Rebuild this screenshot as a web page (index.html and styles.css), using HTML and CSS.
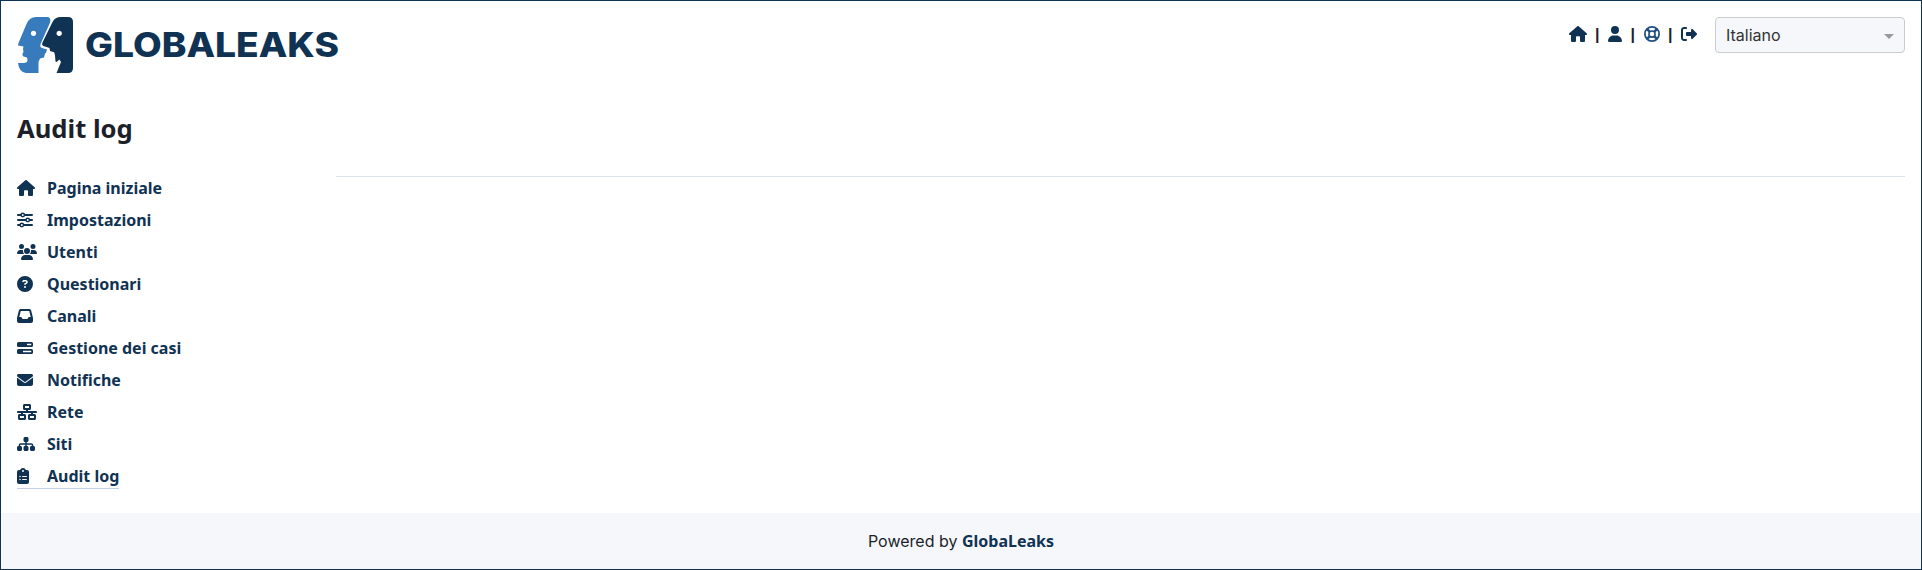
FILE: index.html
```html
<!DOCTYPE html>
<html lang="it">
<head>
<meta charset="utf-8">
<title>GLOBALEAKS - Audit log</title>
<link rel="stylesheet" href="styles.css">
</head>
<body>
<svg class="sprite" aria-hidden="true">
  <symbol id="house" viewBox="0 0 576 512"><path d="M575.8 255.5c0 18-15 32.1-32 32.1h-32l.7 160.2c0 2.700-.2 5.400-.5 8.100V472c0 22.100-17.900 40-40 40H392c-22.100 0-40-17.900-40-40V360c0-17.700-14.300-32-32-32H256c-17.700 0-32 14.300-32 32v112c0 22.100-17.900 40-40 40H104c-22.100 0-40-17.900-40-40V287.600H32c-18 0-32-14-32-32.100 0-9 3-17 10-24L266.400 8c7-7 15-8 22-8s15 2 21 7L564.800 231.500c8 7 12 15 11 24z"/></symbol>
  <symbol id="user" viewBox="0 0 448 512"><path d="M224 256A128 128 0 1 0 224 0a128 128 0 1 0 0 256zm-45.700 48C79.800 304 0 383.800 0 482.300 0 498.700 13.300 512 29.700 512H418.300c16.400 0 29.700-13.300 29.700-29.700C448 383.800 368.200 304 269.700 304H178.300z"/></symbol>
  <symbol id="exit" viewBox="0 0 512 512"><path d="M502.600 278.600c12.500-12.500 12.500-32.800 0-45.300l-128-128c-9.200-9.200-22.900-11.900-34.900-6.900S320 115.100 320 128v64H192c-17.700 0-32 14.300-32 32v64c0 17.700 14.300 32 32 32H320v64c0 12.900 7.800 24.600 19.800 29.600s25.700 2.200 34.900-6.900l128-128zM160 96c17.700 0 32-14.300 32-32s-14.300-32-32-32H96C43 32 0 75 0 128V384c0 53 43 96 96 96h64c17.700 0 32-14.300 32-32s-14.300-32-32-32H96c-17.700 0-32-14.300-32-32V128c0-17.700 14.300-32 32-32h64z"/></symbol>
  <symbol id="ring" viewBox="0 0 512 512"><g fill="none" stroke="currentColor"><circle cx="256" cy="256" r="228" stroke-width="56"/><circle cx="256" cy="256" r="98" stroke-width="52"/><path stroke-width="80" d="M100 100l86 86M412 100l-86 86M100 412l86-86M412 412l-86-86"/></g></symbol>
  <symbol id="sliders" viewBox="0 0 512 512"><g fill="none" stroke="currentColor" stroke-width="48"><path stroke-width="60" stroke-linecap="round" d="M30 96h90M250 96h232M30 256h248M410 256h72M30 416h58M220 416h262"/><circle cx="184" cy="96" r="54"/><circle cx="344" cy="256" r="54"/><circle cx="154" cy="416" r="54"/></g></symbol>
  <symbol id="users" viewBox="0 0 640 512"><path d="M144 0a80 80 0 1 1 0 160A80 80 0 1 1 144 0zM512 0a80 80 0 1 1 0 160A80 80 0 1 1 512 0zM0 298.700C0 239.800 47.800 192 106.700 192h42.700c15.900 0 31 3.500 44.600 9.700-1.300 7.200-1.900 14.700-1.900 22.300 0 38.200 16.800 72.500 43.300 96H21.300C9.600 320 0 310.400 0 298.700zM405.300 320h-.7c26.600-23.500 43.300-57.800 43.300-96 0-7.600-.7-15-1.900-22.300 13.600-6.300 28.700-9.700 44.600-9.700h42.700C592.200 192 640 239.800 640 298.700c0 11.800-9.600 21.300-21.300 21.300H405.300zM224 224a96 96 0 1 1 192 0 96 96 0 1 1-192 0zM128 485.300C128 411.700 187.700 352 261.300 352H378.700C452.300 352 512 411.700 512 485.300c0 14.700-11.900 26.700-26.700 26.700H154.700C140 512 128 500.100 128 485.300z"/></symbol>
  <symbol id="question" viewBox="0 0 512 512"><path d="M256 512A256 256 0 1 0 256 0a256 256 0 1 0 0 512zM169.800 165.300c7.900-22.300 29.100-37.300 52.800-37.300h58.300c34.900 0 63.100 28.300 63.100 63.100 0 22.600-12.100 43.500-31.700 54.800L280 264.400c-.2 13-10.900 23.600-24 23.600-13.300 0-24-10.700-24-24V250.500c0-8.600 4.600-16.500 12.100-20.800l44.300-25.400c4.700-2.700 7.600-7.700 7.600-13.100 0-8.400-6.800-15.100-15.100-15.100H222.600c-3.400 0-6.400 2.100-7.500 5.300l-.4 1.200c-4.400 12.500-18.200 19-30.600 14.600s-19-18.200-14.600-30.600zM224 352a32 32 0 1 1 64 0 32 32 0 1 1-64 0z"/></symbol>
  <symbol id="inbox" viewBox="0 0 512 512"><path d="M121 32C91.600 32 66 52 58.900 80.500L1.900 308.400C.6 313.500 0 318.700 0 323.900V416c0 35.300 28.700 64 64 64H448c35.300 0 64-28.700 64-64V323.900c0-5.200-.6-10.400-1.900-15.500l-57-227.900C446 52 420.400 32 391 32H121zm0 64H391l48 192H387.800c-12.100 0-23.200 6.800-28.600 17.700l-14.300 28.600c-5.400 10.800-16.500 17.700-28.600 17.700H195.800c-12.100 0-23.200-6.800-28.600-17.700l-14.300-28.600C147.400 294.800 136.300 288 124.200 288H73L121 96z"/></symbol>
  <symbol id="bars" viewBox="0 0 512 512"><path fill-rule="evenodd" d="M48 64h416a48 48 0 0 1 48 48v64a48 48 0 0 1-48 48H48a48 48 0 0 1-48-48v-64a48 48 0 0 1 48-48zm272 56v48h136v-48zM48 288h416a48 48 0 0 1 48 48v64a48 48 0 0 1-48 48H48a48 48 0 0 1-48-48v-64a48 48 0 0 1 48-48zm144 56v48h264v-48z"/></symbol>
  <symbol id="mail" viewBox="0 0 512 512"><path d="M48 64C21.500 64 0 85.500 0 112c0 15.100 7.100 29.300 19.200 38.400L236.800 313.600c11.400 8.500 27 8.500 38.400 0L492.800 150.400c12.100-9.100 19.200-23.300 19.200-38.400 0-26.500-21.500-48-48-48H48zM0 176V384c0 35.300 28.700 64 64 64H448c35.300 0 64-28.700 64-64V176L294.400 339.200c-22.800 17.100-54 17.100-76.800 0L0 176z"/></symbol>
  <symbol id="network" viewBox="0 0 640 512"><path d="M256 64H384v64H256V64zM240 0c-26.500 0-48 21.500-48 48v96c0 26.500 21.500 48 48 48h48v32H32c-17.700 0-32 14.300-32 32s14.300 32 32 32h96v32H80c-26.500 0-48 21.500-48 48v96c0 26.500 21.500 48 48 48H240c26.500 0 48-21.500 48-48V368c0-26.500-21.500-48-48-48H192V288H448v32H400c-26.500 0-48 21.500-48 48v96c0 26.500 21.500 48 48 48H560c26.500 0 48-21.500 48-48V368c0-26.500-21.500-48-48-48H512V288h96c17.700 0 32-14.300 32-32s-14.300-32-32-32H352V192h48c26.500 0 48-21.500 48-48V48c0-26.500-21.500-48-48-48H240zM96 448V384H224v64H96zm320-64H544v64H416V384z"/></symbol>
  <symbol id="sitemap" viewBox="0 0 576 512"><path d="M208 80c0-26.500 21.500-48 48-48h64c26.500 0 48 21.500 48 48v64c0 26.500-21.500 48-48 48h-8v40H464c30.900 0 56 25.100 56 56v32h8c26.500 0 48 21.500 48 48v64c0 26.500-21.500 48-48 48H464c-26.500 0-48-21.500-48-48V368c0-26.500 21.500-48 48-48h8V288c0-4.400-3.600-8-8-8H312v40h8c26.500 0 48 21.500 48 48v64c0 26.500-21.500 48-48 48H256c-26.500 0-48-21.500-48-48V368c0-26.500 21.500-48 48-48h8V280H112c-4.400 0-8 3.600-8 8v32h8c26.500 0 48 21.500 48 48v64c0 26.500-21.500 48-48 48H48c-26.500 0-48-21.500-48-48V368c0-26.500 21.500-48 48-48h8V288c0-30.900 25.100-56 56-56H264V192h-8c-26.500 0-48-21.500-48-48V80z"/></symbol>
  <symbol id="clipboard" viewBox="0 0 384 512"><path d="M192 0c-41.800 0-77.400 26.700-90.500 64H64C28.700 64 0 92.700 0 128V448c0 35.300 28.700 64 64 64H320c35.300 0 64-28.700 64-64V128c0-35.300-28.700-64-64-64H282.500C269.400 26.700 233.800 0 192 0zm0 64a32 32 0 1 1 0 64 32 32 0 1 1 0-64zM72 272a24 24 0 1 1 48 0 24 24 0 1 1-48 0zm104-16H304c8.800 0 16 7.200 16 16s-7.200 16-16 16H176c-8.800 0-16-7.200-16-16s7.200-16 16-16zM72 368a24 24 0 1 1 48 0 24 24 0 1 1-48 0zm88 0c0-8.800 7.200-16 16-16H304c8.800 0 16 7.200 16 16s-7.200 16-16 16H176c-8.800 0-16-7.200-16-16z"/></symbol>
</svg>
<div class="page">
  <header class="header">
    <svg class="logo" viewBox="0 0 322 56" role="img" aria-label="GLOBALEAKS">
      <path class="face-light" d="M19 0h11q4 0 3.300 5L24 26q-1.500 3 0 4.500l2.500 1 3.500 1-1 3.500-1 .5-1 4-4 1-1.500 3.500v11H9Q2 55 1 46h5q5 0 4.500-3.500l-.5-2-3.500-1q-1.500-1-1-3l1-1.500-.5-3 .5-2.500-5.500-1 .5-2.500L9.500 7Q12.500 0 19 0z"/>
      <path class="face-dark" d="M44 0h7q5 0 5 5v46q0 5-5 5H39.500L44 45l-1.500-2.500-3 2.500-1-.5-.5-6-.8-3.200L33 34l-.5-3-3-1-3-1q-2-1-1-3.500L35.500 5q2.500-5 8.500-5z"/>
      <circle class="eye" cx="16.500" cy="16.300" r="2.600"/><circle class="eye" cx="42.200" cy="16.300" r="2.600"/>
      <text class="wordmark" x="68" y="40" textLength="254" lengthAdjust="spacingAndGlyphs">GLOBALEAKS</text>
    </svg>
    <div class="tools">
      <a class="tool"><svg class="icon w18"><use href="#house"/></svg></a><span class="sep">|</span>
      <a class="tool"><svg class="icon w14"><use href="#user"/></svg></a><span class="sep">|</span>
      <a class="tool help"><svg class="icon w16"><use href="#ring"/></svg></a><span class="sep">|</span>
      <a class="tool"><svg class="icon w16"><use href="#exit"/></svg></a>
      <div class="select"><span>Italiano</span><i class="caret"></i></div>
    </div>
  </header>
  <h1 class="title">Audit log</h1>
  <main class="main">
    <nav class="menu">
      <a class="item"><span class="slot"><svg class="icon w18"><use href="#house"/></svg></span>Pagina iniziale</a>
      <a class="item"><span class="slot"><svg class="icon w16"><use href="#sliders"/></svg></span>Impostazioni</a>
      <a class="item"><span class="slot"><svg class="icon w20"><use href="#users"/></svg></span>Utenti</a>
      <a class="item"><span class="slot"><svg class="icon w16"><use href="#question"/></svg></span>Questionari</a>
      <a class="item"><span class="slot"><svg class="icon w16"><use href="#inbox"/></svg></span>Canali</a>
      <a class="item"><span class="slot"><svg class="icon w16"><use href="#bars"/></svg></span>Gestione dei casi</a>
      <a class="item"><span class="slot"><svg class="icon w16"><use href="#mail"/></svg></span>Notifiche</a>
      <a class="item"><span class="slot"><svg class="icon w20"><use href="#network"/></svg></span>Rete</a>
      <a class="item"><span class="slot"><svg class="icon w18"><use href="#sitemap"/></svg></span>Siti</a>
      <a class="item active"><span class="slot"><svg class="icon w12"><use href="#clipboard"/></svg></span>Audit log</a>
    </nav>
    <section class="content"></section>
  </main>
  <footer class="footer"><span>Powered by <a class="brand">GlobaLeaks</a></span></footer>
</div>
</body>
</html>
```
FILE: styles.css
```css
* { box-sizing: border-box; }
body { margin: 0; background: #fff; color: #1d1f2a; font: 16px/24px Inter, sans-serif; }
.sprite { display: none; }
.page { display: flex; flex-direction: column; height: 570px; border: 1px solid #103253; }
.header { display: flex; justify-content: space-between; align-items: flex-start; padding: 16px 16px 0; height: 96px; }
.logo { display: block; width: 322px; height: 56px; overflow: visible; }
.face-light { fill: #377bbc; }
.face-dark { fill: #103253; }
.eye { fill: #fff; }
.wordmark { fill: #103253; font: 800 34px Inter, sans-serif; }
.tools { display: flex; align-items: flex-start; }
.tool { display: flex; padding-top: 9px; color: #103253; }
.help { color: #205081; }
.icon { display: block; height: 16px; fill: currentColor; }
.w12 { width: 12px; }
.w14 { width: 14px; }
.w16 { width: 16px; }
.w18 { width: 18px; }
.w20 { width: 20px; }
.sep { width: 21.500px; padding-top: 6px; text-align: center; font-family: "Liberation Sans", sans-serif; font-weight: 700; }
.select { display: flex; justify-content: space-between; align-items: center; width: 190px; height: 36px; margin-left: 18px; padding: 0 10px; border: 1px solid #ccc; border-radius: 4px; background: #f5f7fb; color: #333; }
.caret { margin: 3px 0 0; border: 5px solid transparent; border-top-color: #999; border-bottom: 0; }
.title { margin: 16px 16px 0; font: 700 25.600px/32px "Noto Sans", sans-serif; }
.main { display: flex; padding: 27px 16px 0; height: 368px; }
.menu { display: flex; flex-direction: column; align-items: flex-start; width: 319px; }
.item { display: flex; align-items: center; height: 32px; color: #103253; font: 700 16px/24px "Noto Sans", sans-serif; }
.active { height: 29px; padding-top: 4px; border-bottom: 1px solid #c3d0e5; }
.slot { width: 30px; }
.content { flex: 1; height: 1px; margin-top: 4px; background: #dbe3ef; }
.footer { display: flex; flex: 1; justify-content: center; align-items: center; background: #f5f7fb; }
.brand { color: #103253; font-family: "Noto Sans", sans-serif; font-weight: 700; }
```
